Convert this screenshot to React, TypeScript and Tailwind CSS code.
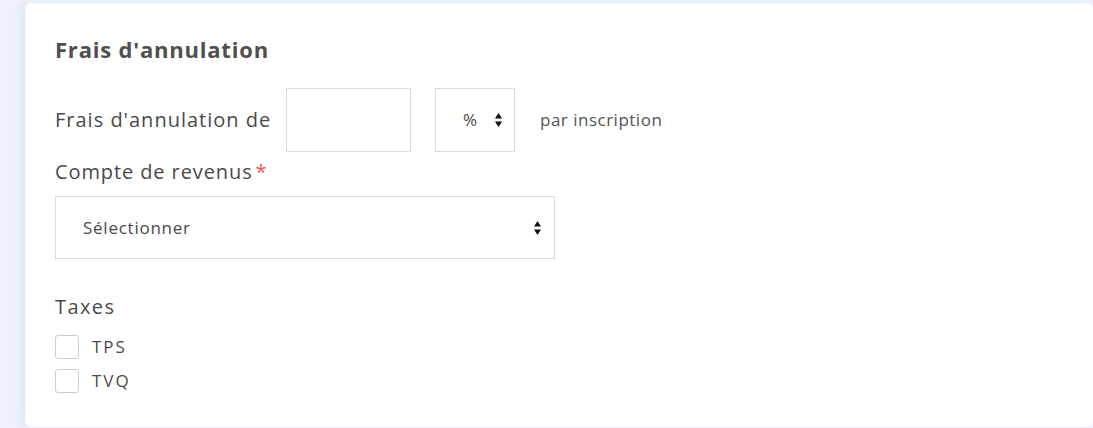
function SortArrows() {
  return (
    <svg width="7" height="14" viewBox="0 0 7 14" className="shrink-0">
      <path d="M3.5 0 L7 5.5 H0 Z" fill="#111" />
      <path d="M0 8.5 H7 L3.5 14 Z" fill="#111" />
    </svg>
  )
}

function Checkbox({ label }: { label: string }) {
  return (
    <label className="flex items-center h-[34px]">
      <span className="w-6 h-6 rounded-[3px] border border-[#c9ced6] bg-white" />
      <span className="ml-[13px] text-[17px] text-[#4a4a4a] tracking-[2px]">{label}</span>
    </label>
  )
}

export default function App() {
  return (
    <div className="w-[1093px] h-[428px] bg-[#eef2fc] pt-[3px] pl-[25px] overflow-hidden" style={{ fontFamily: "'Open Sans', 'Noto Sans', sans-serif" }}>
      <div className="bg-white rounded-[6px] h-[424px] pl-[30px] pt-[32px] shadow-[-4px_0_10px_rgba(180,195,230,0.25)]">
        <h2 className="text-[22px] font-bold text-[#4f4f4f] leading-[28px] tracking-[0.8px]">Frais d'annulation</h2>

        <div className="flex items-center mt-[25px]">
          <span className="text-[20px] text-[#4a4a4a] w-[231px] tracking-[1px]">Frais d'annulation de</span>
          <div className="w-[125px] h-[64px] border border-[#d5dbe5] bg-white" />
          <div className="ml-[24px] w-[80px] h-[64px] border border-[#d5dbe5] bg-white flex items-center justify-end pr-[12px] gap-[18px]">
            <span className="text-[17px] text-[#4a4a4a]">%</span>
            <SortArrows />
          </div>
          <span className="ml-[25px] text-[17px] text-[#555] tracking-[0.5px]">par inscription</span>
        </div>

        <div className="mt-[6px] text-[20px] text-[#4a4a4a] leading-[28px] tracking-[0.9px]">
          Compte de revenus<span className="text-[#f0524f] ml-[3px]">*</span>
        </div>
        <div className="mt-[10px] w-[500px] h-[63px] border border-[#d5dbe5] bg-white flex items-center justify-between pl-[27px] pr-[13px]">
          <span className="text-[17px] text-[#4a4a4a] tracking-[0.75px]">Sélectionner</span>
          <SortArrows />
        </div>

        <div className="mt-[35px] text-[20px] text-[#4a4a4a] leading-[26px] tracking-[1.4px]">Taxes</div>
        <div className="mt-[10px]">
          <Checkbox label="TPS" />
          <Checkbox label="TVQ" />
        </div>
      </div>
    </div>
  )
}
